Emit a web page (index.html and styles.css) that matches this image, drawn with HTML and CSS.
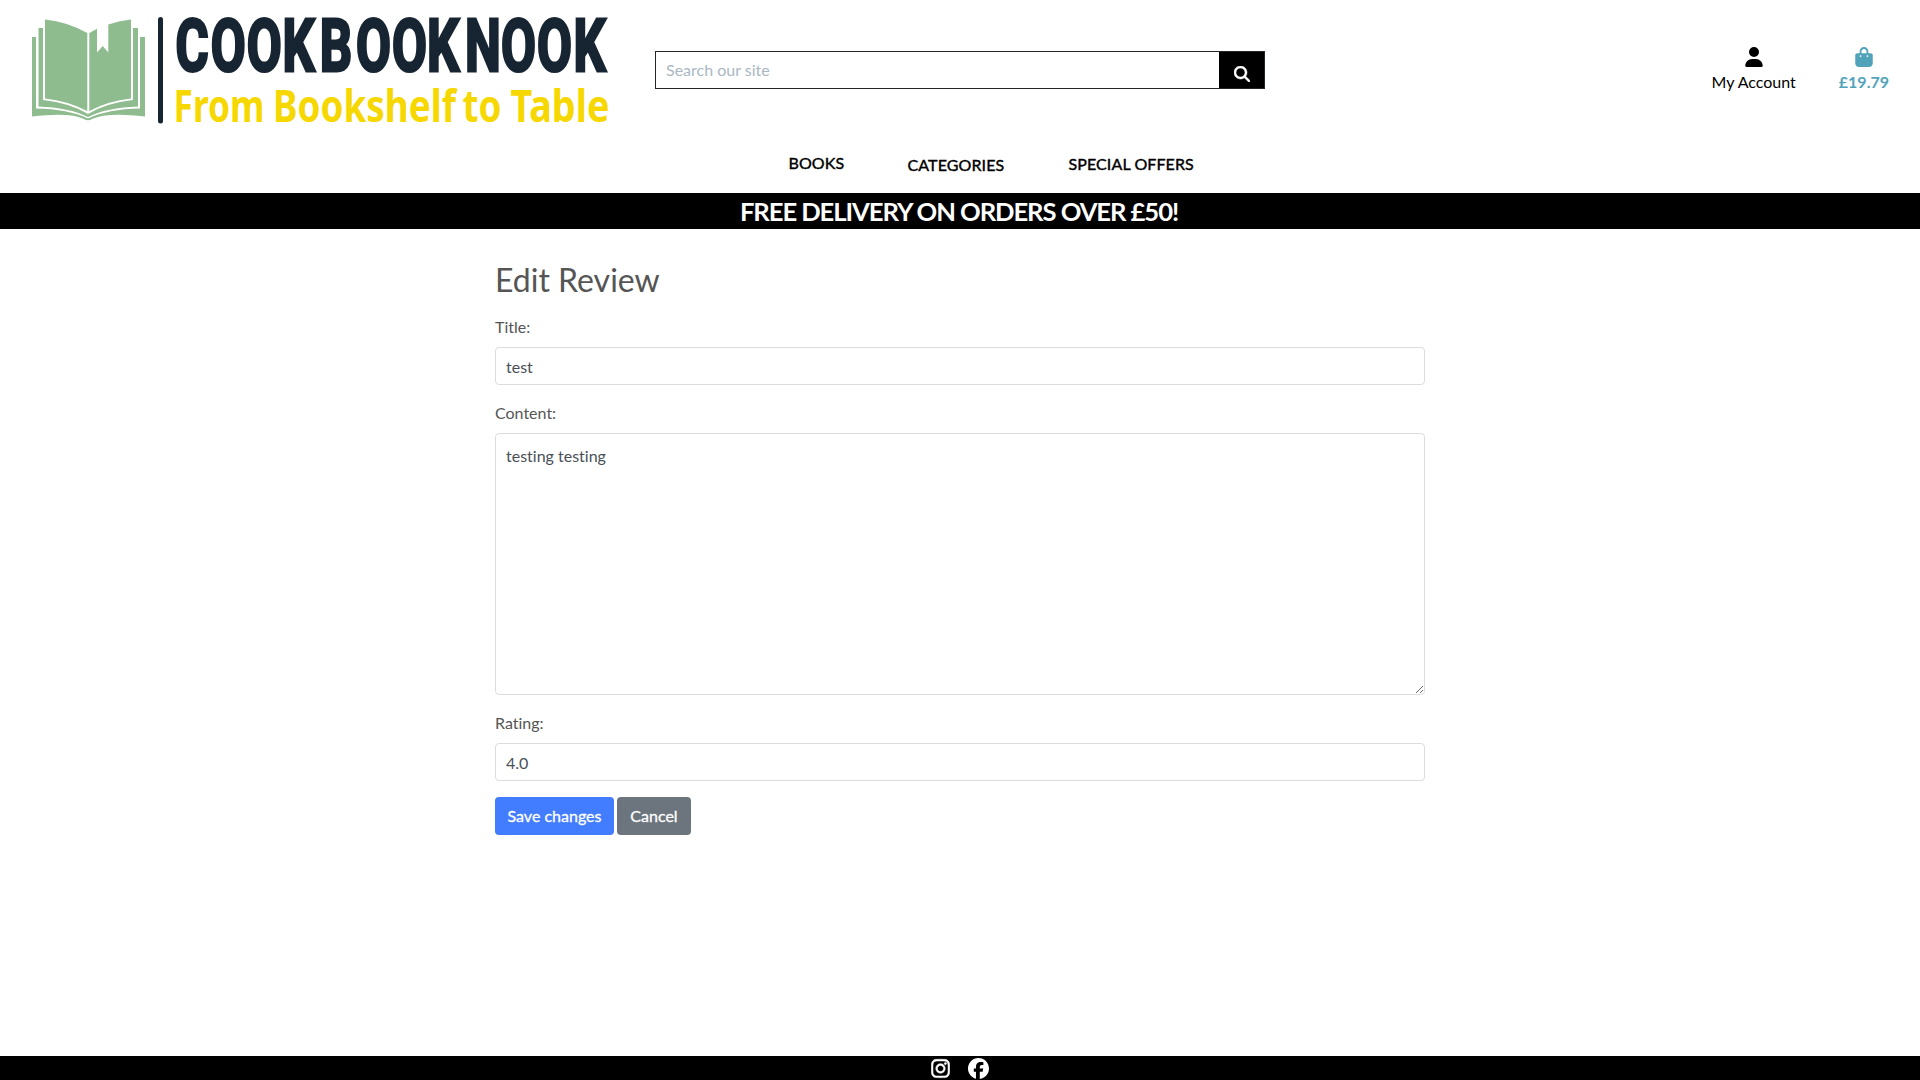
FILE: index.html
```html
<!DOCTYPE html>
<html lang="en">
<head>
<meta charset="utf-8">
<title>Cookbooknook</title>
<link rel="stylesheet" href="styles.css">
</head>
<body>
<header class="header">
  <div class="topbar">
    <a class="logo" href="#">
      <svg width="600" height="140" viewBox="20 0 600 140">
        <g fill="#8fbc8f">
          <path d="M45 19.500Q68 22 87.300 33V111Q68 101 45 98.500Z"/>
          <path d="M89.300 33L97 28.800V52.500L102.700 46L108.300 52.500V24.500Q120 20.500 131 19.500V98.500Q108 101 89.300 111Z"/>
          <path d="M38.500 28H43V100Q70 103 88 114Q106 103 133 100V28H138V106.500Q107 107.500 88 117Q69 107.500 38.500 106.500Z"/>
          <path d="M32 37H36V108.500Q68 109 88 118.500Q108 109 140 108.500V37H145V116.500Q107 112 92 119Q88 121.500 84 119Q70 112 32 116.500Z"/>
        </g>
        <rect x="158" y="17" width="5" height="106.500" rx="2.500" fill="#172432"/>
        <text class="logo-name" transform="scale(.7 1)" x="250.700 301 352.400 403.700 456.800 508.400 559.900 610.100 664.400 715.600 767 819.400" y="70.800">COOKBOOKNOOK</text>
        <g class="logo-tag">
          <text x="173.500" y="121.700" textLength="91" lengthAdjust="spacingAndGlyphs">From</text>
          <text x="273" y="121.700" textLength="183" lengthAdjust="spacingAndGlyphs">Bookshelf</text>
          <text x="462.500" y="121.700" textLength="39" lengthAdjust="spacingAndGlyphs">to</text>
          <text x="510.500" y="121.700" textLength="99" lengthAdjust="spacingAndGlyphs">Table</text>
        </g>
      </svg>
    </a>
    <form class="search">
      <input class="search-input" type="text" placeholder="Search our site">
      <button class="search-button" type="button" aria-label="Search">
        <svg width="16" height="16" viewBox="0 0 512 512" fill="#fff" stroke="#fff" stroke-width="16"><path d="M416 208c0 45.900-14.900 88.300-40 122.700L502.600 457.400c12.500 12.500 12.500 32.800 0 45.300s-32.800 12.500-45.300 0L330.700 376c-34.400 25.200-76.800 40-122.700 40C93.100 416 0 322.900 0 208S93.100 0 208 0S416 93.100 416 208zM208 352a144 144 0 1 0 0-288 144 144 0 1 0 0 288z"/></svg>
      </button>
    </form>
    <div class="links">
      <a class="link" href="#">
        <svg width="18" height="20" viewBox="0 0 448 512" fill="#000"><path d="M224 256A128 128 0 1 0 224 0a128 128 0 1 0 0 256zm-45.700 48C79.800 304 0 383.800 0 482.300C0 498.700 13.300 512 29.700 512H418.300c16.400 0 29.700-13.300 29.700-29.700C448 383.800 368.200 304 269.700 304H178.300z"/></svg>
        <span>My Account</span>
      </a>
      <a class="link link-bag" href="#">
        <svg width="18" height="20" viewBox="0 0 448 512" fill="#51a3ba"><path d="M160 112c0-35.300 28.700-64 64-64s64 28.700 64 64v48H160V112zm-48 48H48c-26.500 0-48 21.500-48 48V416c0 53 43 96 96 96H352c53 0 96-43 96-96V208c0-26.500-21.500-48-48-48H336V112C336 50.100 285.900 0 224 0S112 50.100 112 112v48zm24 48a24 24 0 1 1 0 48 24 24 0 1 1 0-48zm152 24a24 24 0 1 1 48 0 24 24 0 1 1-48 0z"/></svg>
        <span>£19.79</span>
      </a>
    </div>
  </div>
  <nav class="nav">
    <a class="nav-books" href="#">BOOKS</a>
    <a class="nav-categories" href="#">CATEGORIES</a>
    <a class="nav-offers" href="#">SPECIAL OFFERS</a>
  </nav>
</header>
<div class="banner">FREE DELIVERY ON ORDERS OVER £50!</div>
<main class="main">
  <h2 class="heading">Edit Review</h2>
  <form>
    <div class="field">
      <label for="title">Title:</label>
      <input class="control" id="title" type="text" value="test">
    </div>
    <div class="field">
      <label for="content">Content:</label>
      <textarea class="control area" id="content">testing testing</textarea>
    </div>
    <div class="field">
      <label for="rating">Rating:</label>
      <input class="control" id="rating" type="text" value="4.0">
    </div>
    <div class="actions">
      <button class="btn btn-save" type="button">Save changes</button>
      <button class="btn btn-cancel" type="button">Cancel</button>
    </div>
  </form>
</main>
<footer class="footer">
  <svg width="19" height="21" viewBox="0 0 448 512" fill="#fff" stroke="#fff" stroke-width="14"><path d="M224.100 141c-63.600 0-114.900 51.300-114.900 114.900s51.300 114.900 114.900 114.900S339 319.500 339 255.900 287.700 141 224.100 141zm0 189.600c-41.100 0-74.700-33.500-74.700-74.700s33.500-74.700 74.700-74.700 74.700 33.500 74.700 74.700-33.600 74.700-74.700 74.700zm146.400-194.300c0 14.900-12 26.800-26.800 26.800-14.900 0-26.800-12-26.800-26.800s12-26.800 26.800-26.800 26.800 12 26.800 26.800zm76.100 27.200c-1.700-35.900-9.900-67.700-36.200-93.900-26.200-26.200-58-34.400-93.900-36.200-37-2.100-147.900-2.100-184.900 0-35.800 1.700-67.600 9.900-93.900 36.100s-34.400 58-36.200 93.900c-2.100 37-2.100 147.900 0 184.900 1.700 35.900 9.900 67.700 36.200 93.900s58 34.400 93.900 36.200c37 2.100 147.900 2.100 184.900 0 35.900-1.700 67.700-9.900 93.900-36.200 26.200-26.200 34.400-58 36.200-93.900 2.100-37 2.100-147.800 0-184.800zM398.800 388c-7.800 19.600-22.900 34.700-42.600 42.600-29.500 11.700-99.500 9-132.100 9s-102.700 2.600-132.100-9c-19.600-7.800-34.700-22.900-42.600-42.600-11.700-29.500-9-99.500-9-132.100s-2.600-102.700 9-132.100c7.800-19.600 22.900-34.700 42.600-42.600 29.500-11.700 99.500-9 132.100-9s102.700-2.600 132.100 9c19.600 7.800 34.700 22.900 42.600 42.600 11.700 29.500 9 99.500 9 132.100s2.700 102.700-9 132.100z"/></svg>
  <svg width="21" height="21" viewBox="0 0 512 512" fill="#fff"><path d="M512 256C512 114.600 397.400 0 256 0S0 114.600 0 256C0 376 82.700 476.800 194.200 504.500V334.200H141.400V256h52.800V222.300c0-87.100 39.400-127.500 125-127.500c16.200 0 44.200 3.200 55.700 6.400V172c-6-.6-16.500-1-29.600-1c-42 0-58.200 15.900-58.200 57.200V256h83.600l-14.400 78.200H287V510.100C413.800 494.800 512 386.900 512 256z"/></svg>
</footer>
</body>
</html>
```
FILE: styles.css
```css
* { box-sizing: border-box; }
body {
  margin: 0;
  height: 1080px;
  display: flex;
  flex-direction: column;
  background: #fff;
  color: #555;
  font: 16px/24px Lato, sans-serif;
  font-variant-ligatures: none;
}
a { color: #000; text-decoration: none; }
svg { display: block; }
.header { height: 193px; }
.topbar {
  height: 140px;
  padding: 0 31px 0 20px;
  display: flex;
  align-items: center;
}
.logo { width: 635px; }
.logo-name {
  font: 700 72.500px Roboto, sans-serif;
  fill: #172432;
  stroke: #172432;
  stroke-width: 3px;
}
.logo-tag { font: 700 45px "Noto Sans", sans-serif; fill: #f6d800; }
.search { display: flex; width: 610px; height: 38px; border: 1px solid #212529; }
.search-input {
  flex: 1;
  min-width: 0;
  padding: 0 10px;
  border: 0;
  font: inherit;
}
.search-input::placeholder { color: #aab7c4; }
.search-button {
  width: 45px;
  padding: 8px 0 0;
  border: 0;
  background: #000;
  display: flex;
  align-items: center;
  justify-content: center;
}
.links { margin-left: auto; display: flex; gap: 43px; }
.link { display: flex; flex-direction: column; align-items: center; gap: 3px; }
.link-bag { color: #51a3ba; font-weight: 700; }
.nav {
  padding: 11px 0 0 788.500px;
  display: grid;
  grid-template-columns: 119px 161px auto;
  letter-spacing: 0.100px;
  -webkit-text-stroke: 0.400px #000;
}
.nav-categories { padding-top: 2px; }
.nav-offers { padding-top: 1px; }
.banner {
  height: 36px;
  padding-right: 2px;
  background: #000;
  color: #fff;
  text-align: center;
  font-size: 25.600px;
  font-weight: 700;
  line-height: 36px;
  letter-spacing: -1.060px;
}
.main { width: 930px; margin: 0 auto; padding-top: 32px; flex: 1; }
.heading { margin: 0 0 16px; font-size: 32px; font-weight: 400; line-height: 38px; }
.field { margin-bottom: 16px; }
.field label { display: block; margin-bottom: 8px; }
.control {
  display: block;
  width: 100%;
  height: 38px;
  padding: 7px 10px 6px;
  border: 1px solid #dcdcdc;
  border-radius: 4px;
  color: #495057;
  background: #fff;
  font: inherit;
  font-variant-ligatures: none;
}
.area { height: 262px; padding-top: 10px; }
.actions { display: flex; gap: 3px; }
.btn {
  height: 38px;
  padding: 0;
  border: 0;
  border-radius: 4px;
  color: #fff;
  font: inherit;
  -webkit-text-stroke: 0.300px #fff;
}
.btn-save { width: 119px; background: #437dff; }
.btn-cancel { width: 74px; background: #6c757d; }
.footer {
  height: 24px;
  background: #000;
  display: flex;
  align-items: center;
  justify-content: center;
  gap: 18px;
}
```
